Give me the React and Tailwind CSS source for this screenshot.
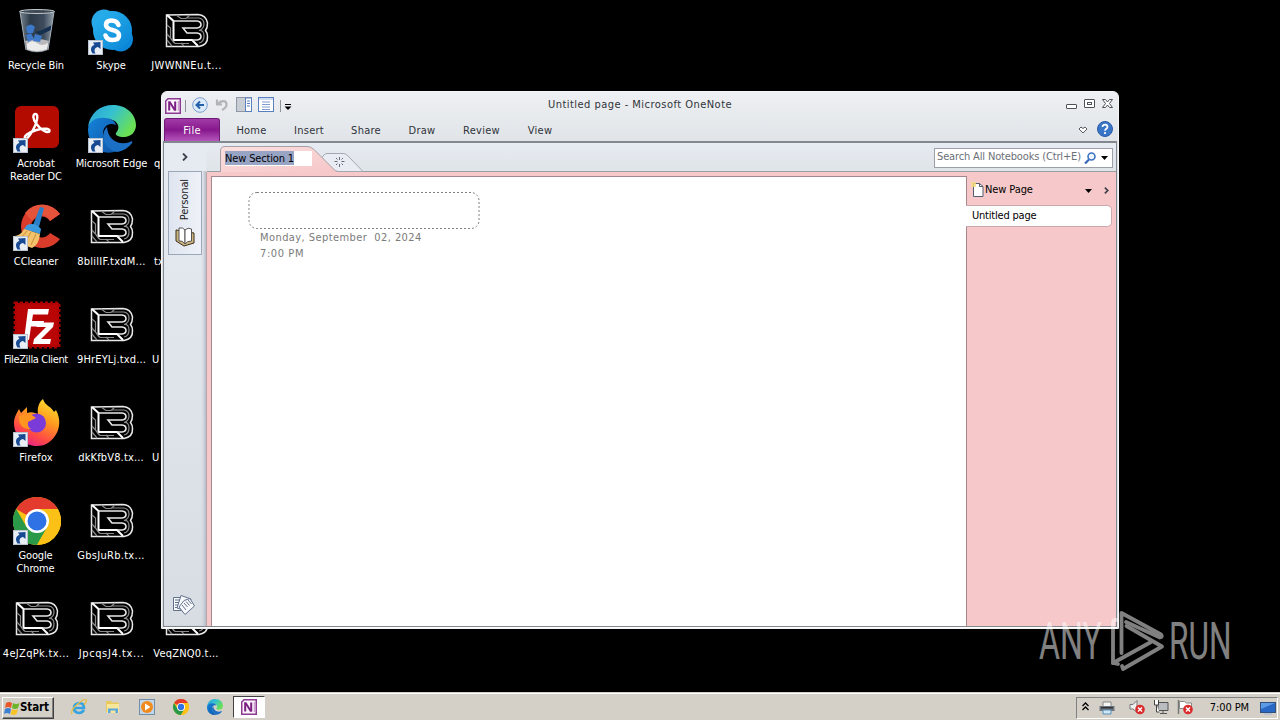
import { useId } from "react";
import { clsx } from "clsx";

function ShortcutArrow() {
  return (
    <svg viewBox="0 0 15 15" className="absolute left-0 bottom-0 h-[15px] w-[15px]">
      <rect x=".5" y=".5" width="14" height="14" fill="#e9eef5" stroke="#b9c2cf" />
      <path d="M4.500 13.500C1.500 9 3.500 5.500 6.500 5L5 2.500l7.500-.5 0 7-2.500-2C7 7.500 5.500 10 7.500 13.500z" fill="#174a93" />
    </svg>
  );
}

function RecycleIcon() {
  return (
    <svg viewBox="0 0 48 48" className="h-12 w-12">
      <defs>
        <linearGradient id="bin" x1="0" x2="1">
          <stop offset="0" stopColor="#76838f" />
          <stop offset=".3" stopColor="#2d3a48" />
          <stop offset=".7" stopColor="#3d4c5c" />
          <stop offset="1" stopColor="#93a0ab" />
        </linearGradient>
      </defs>
      <path d="M7 4 41 4 35 43Q24 48 13 43z" fill="url(#bin)" />
      <path d="M12 34Q24 30 36 34L34 43Q24 47 14 43z" fill="#b9b9bc" />
      <path d="M14 37Q19 32 24 36T35 36L34 42Q24 46 14 42z" fill="#ececec" />
      <path d="M13 20q5-5 9 0l-2 6-6 0zM22 27l7 2-2 6-7-1zM13 28l5-2 3 6-6 3z" fill="#3d78c9" />
      <path d="M22 25 29 23 39 18 38 23 27 28z" fill="#15304f" />
      <ellipse cx="24" cy="4.500" rx="17.500" ry="2" fill="#3f4a55" stroke="#c3cad0" />
      <path d="M7 5 13 43M41 5 35 43" stroke="#a9b3bc" fill="none" />
    </svg>
  );
}

function SkypeIcon() {
  return (
    <svg viewBox="0 0 48 48" className="h-12 w-12">
      <defs>
        <linearGradient id="sky" y2="1">
          <stop offset="0" stopColor="#2bb5ee" />
          <stop offset="1" stopColor="#0a84d6" />
        </linearGradient>
      </defs>
      <circle cx="16" cy="15" r="12.500" fill="#28a9e8" />
      <circle cx="32.500" cy="32" r="12.500" fill="#0b86d8" />
      <circle cx="24.500" cy="23.500" r="19.500" fill="url(#sky)" />
      <path d="M30.500 18q-1.500-4.500-7-4.500-5.500 0-5.500 4.500 0 3.500 6.500 5 6.500 1.500 6.500 5.500 0 4.500-6.500 4.500-5.500 0-7-4.500" fill="none" stroke="#fff" strokeWidth="4.600" strokeLinecap="round" />
    </svg>
  );
}

function AcrobatIcon() {
  return (
    <svg viewBox="0 0 48 48" className="h-12 w-12">
      <rect x="2" y="1" width="44" height="42" rx="6" fill="#b30b00" />
      <path d="M12.500 33.500c-3-2 3-6 11-8.500 7-2 14-1.500 13 1-1 3-9-1-13-7-4-5-4-10-1-10s2 7-1 13c-2.500 5-7 13-9 11.500z" fill="none" stroke="#fff" strokeWidth="2.400" />
    </svg>
  );
}

function EdgeIcon({ className }) {
  const id = useId();
  return (
    <svg viewBox="0 0 48 48" className={className}>
      <defs>
        <linearGradient id={id + "a"} x1="0" y1="0" x2="1" y2=".5">
          <stop offset="0" stopColor="#2a9fd8" />
          <stop offset=".5" stopColor="#35c1d0" />
          <stop offset="1" stopColor="#6adf55" />
        </linearGradient>
        <linearGradient id={id + "b"} y2="1">
          <stop offset="0" stopColor="#1583d8" />
          <stop offset="1" stopColor="#0f55a8" />
        </linearGradient>
      </defs>
      <path d="M0 22C2 8 12 0 25 0c14 0 23 10 23 20 0 7-5 12-12 12-6 0-9-2-8-4 6-7 0-14-9-14C9 14 2 18 0 22z" fill={`url(#${id}a)`} />
      <path d="M0 24c1-8 8-12 17-11 6 0 10 3 11 7-7-3-13 1-13 9 0 9 7 15 14 17-15 6-29-5-29-22z" fill={`url(#${id}b)`} />
      <path d="M19 22c-8 8-3 22 10 25 7-1 12-5 15-9 1-2-1-2-2-1-10 4-22-1-23-15z" fill="#1b6fc4" />
    </svg>
  );
}

function CCleanerIcon() {
  return (
    <svg viewBox="0 0 48 48" className="h-12 w-12">
      <path d="M47 11A21.500 21.500 0 1 0 47 36L37 30A10.500 10.500 0 1 1 37 18z" fill="#d93c2b" />
      <path d="M47 11A21.500 21.500 0 0 0 12 10l7 8a10 10 0 0 1 18 0z" fill="#e5533a" />
      <path d="M27 4 31 5 26 24 20 22z" fill="#2c7fc6" />
      <path d="M14 22q8-3 14 4l-1 5-16-5z" fill="#3b9ade" />
      <path d="M11 26 27 31Q26 42 19 45 8 42 2 33q6-1 9-7z" fill="#f2c36b" />
      <path d="M14 28 7 36M18 29 12 40M23 31 18 42" stroke="#c98f3c" />
    </svg>
  );
}

function FileZillaIcon() {
  return (
    <svg viewBox="0 0 48 48" className="h-12 w-12">
      <rect x="2" y="2" width="44" height="44" fill="#b90505" stroke="#a00" strokeWidth="3" strokeDasharray="3 2" />
      <path d="M11 39 15 8 36 8 35 13.500 20 13.500 19 20 31 20 30 25.500 18 25.500 16 39z" fill="#fff" />
      <path d="M24 21.500 41 21.500 40 26 28 38 38 38 37 43 20 43 21 38 33 26 23.500 26z" fill="#fff" />
    </svg>
  );
}

function FirefoxIcon() {
  return (
    <svg viewBox="0 0 48 48" className="h-12 w-12">
      <defs>
        <linearGradient id="ff" x1=".8" y1="0" x2=".3" y2="1">
          <stop offset="0" stopColor="#ffe22e" />
          <stop offset=".4" stopColor="#ff9a1f" />
          <stop offset=".75" stopColor="#ff4a45" />
          <stop offset="1" stopColor="#e8208a" />
        </linearGradient>
      </defs>
      <path d="M30 0c2 7 8 7 11 13l2-2c5 9 4 19-1 26C37 44 31 47 24 47 11 47 1 37 1 24c0-6 3-10 5-14l2 4 6-6 0 6c4-2 9 0 11 1-1-6 1-12 5-15z" fill="url(#ff)" />
      <circle cx="23.500" cy="24" r="9.500" fill="#7a3bd8" />
      <path d="M6 17c8-3 13-2 17 2l-6 3c-3 0-3 6 1 8-8 1-13-5-12-13z" fill="#ff9420" />
    </svg>
  );
}

function ChromeIcon({ className }) {
  return (
    <svg viewBox="0 0 48 48" className={className}>
      <circle cx="24" cy="24" r="24" fill="#fbc116" />
      <path d="M24 24 3.200 12A24 24 0 0 1 44.800 12z" fill="#e33b2e" />
      <path d="M3.200 12A24 24 0 0 0 24 48L34.400 30 24 24 13.600 30z" fill="#2b9a48" />
      <path d="M24 12 44.800 12A24 24 0 0 1 24 48L34.400 30z" fill="#fbc116" />
      <circle cx="24" cy="24" r="12" fill="#fff" />
      <circle cx="24" cy="24" r="9.500" fill="#2f72e6" />
    </svg>
  );
}

// traced "B" mark: outer outline, inner E cut and the thin hatch lines between
function TextFileIcon() {
  return (
    <svg viewBox="0 0 48 48" className="h-12 w-12" fill="none">
      <path d="M3.500 8 3.500 39.500 36 39.500Q45 38 44.500 29.500 44.500 26 42.500 23.500 44.500 21 44.500 16 43 8 35 7.500z" stroke="#e8e8e8" strokeWidth="1.500" />
      <path d="M4 8 10.500 14 10.500 33 29 33 35 39" stroke="#fff" strokeWidth="2" />
      <path d="M10.500 14 34 14Q38 14.500 38 17.500T34 21L20 21 24 26 34 26Q38 26.500 38 29.500T34 33L29 33" stroke="#e8e8e8" strokeWidth="1.600" />
      <path d="M13 8 18 11.500 23 11.500 27 8M23 11 36 11Q41 12 41 17T36 23.500M4 18 7.500 21 7.500 31 11 36M4 27 12 36.500 26 36.500M4 33 9 39M18 36 21 39M36 36Q41 35 41 29T36 23.500" stroke="#8b8b8b" strokeWidth="1.200" />
    </svg>
  );
}

const desktopIcons = [
  { label: "Recycle Bin", icon: <RecycleIcon /> },
  { label: "Acrobat Reader DC", icon: <AcrobatIcon />, shortcut: true, text: "pl-[8px] pr-[9px] tracking-[-0.1px]" },
  { label: "CCleaner", icon: <CCleanerIcon />, shortcut: true },
  { label: "FileZilla Client", icon: <FileZillaIcon />, shortcut: true, text: "pr-px tracking-[-0.35px]" },
  { label: "Firefox", icon: <FirefoxIcon />, shortcut: true, text: "pr-px tracking-[0.1px]" },
  { label: "Google Chrome", icon: <ChromeIcon className="h-12 w-12" />, shortcut: true, text: "pl-[15px] pr-[17px] tracking-[-0.15px]" },
  { label: "4eJZqPk.tx...", text: "pr-px tracking-[0.3px]" },
  { label: "Skype", icon: <SkypeIcon />, shortcut: true },
  { label: "Microsoft Edge", icon: <EdgeIcon className="h-12 w-12" />, shortcut: true, text: "whitespace-nowrap tracking-[-0.1px]" },
  { label: "8blilIF.txdM...", text: "tracking-[0.25px]" },
  { label: "9HrEYLj.txd...", text: "tracking-[0.15px]" },
  { label: "dkKfbV8.tx...", text: "pr-px tracking-[0.15px]" },
  { label: "GbsJuRb.tx...", text: "pr-px tracking-[0.3px]" },
  { label: "JpcqsJ4.tx...", text: "tracking-[0.6px]" },
  { label: "JWWNNEu.t...", text: "tracking-[0.35px]" },
  { label: "q", text: "pl-[5px] !text-left" },
  { label: "tx", text: "pl-[5px] !text-left" },
  { label: "U", text: "pl-[3px] !text-left" },
  { label: "U", text: "pl-[3px] !text-left" },
  { label: "" },
  { label: "VeqZNQ0.t...", text: "pr-px tracking-[0.2px]" },
];

function DesktopIcon({ label, icon, shortcut, text = "pr-px tracking-[-0.1px]" }) {
  return (
    <div className="flex h-[98px] flex-col items-center pt-[7px]">
      <div className="relative h-12 w-12">
        {icon || <TextFileIcon />}
        {shortcut && <ShortcutArrow />}
      </div>
      <div className={clsx("mt-[4px] w-[75px] text-center text-[11px] leading-[13px] text-white", text)}>
        {label}
      </div>
    </div>
  );
}

function OneNoteIcon() {
  return (
    <svg viewBox="0 0 16 16" className="h-4 w-4 shrink-0">
      <path d="M.75 3 3 .75 15.250.75 15.250 15.250.75 15.250z" fill="#fbf3fb" stroke="#8c3a92" strokeWidth="1.500" />
      <path d="M4.200 12.500 4.200 3.500M10.200 12.500 10.200 3.500" stroke="#7b1f82" strokeWidth="2" />
      <path d="M3.200 3.500H5.500L11.200 12.500H8.900z" fill="#7b1f82" />
      <path d="M13.300 3v10" stroke="#c48cc8" />
    </svg>
  );
}

function TitleBar() {
  return (
    <div className="relative flex h-[25px] items-center pl-[2px]">
      <OneNoteIcon />
      <div className="ml-[4px] h-3 w-px bg-[#8d939b]" />
      <svg viewBox="0 0 16 16" className="-mt-px ml-[6px] h-4 w-4">
        <circle cx="8" cy="8" r="7.300" fill="#dcebfa" stroke="#7f9ccc" />
        <path d="M12 8H5M8 4.500 4.500 8 8 11.500" fill="none" stroke="#2460a8" strokeWidth="2" />
      </svg>
      <svg viewBox="0 0 14 14" className="-mt-[2px] ml-[7px] h-[14px] w-[14px]">
        <path d="M2 1.500v5h5M3 6C6 2 11.500 2 11.500 6.500 11.500 9.500 9 11 7 12" fill="none" stroke="#b2b4b8" strokeWidth="2.200" />
      </svg>
      <svg viewBox="0 0 16 16" className="-mt-px ml-[7px] h-4 w-4">
        <rect x=".5" y=".5" width="15" height="14" fill="#c9cdd4" stroke="#8d97a8" />
        <rect x="9.500" y="1" width="6" height="13.500" fill="#fff" stroke="#5a7fc0" />
        <path d="M11 4h3M11 6.500h3M11 9h3" stroke="#5a7fc0" />
      </svg>
      <svg viewBox="0 0 16 16" className="-mt-px ml-[6px] h-4 w-4">
        <rect x=".5" y=".5" width="15" height="14" fill="#fff" stroke="#5a7fc0" />
        <path d="M1 2h14" stroke="#9db7e2" />
        <path d="M4 5h8M4 7.500h8M4 10h8M4 12.500h8" stroke="#7f9cd0" />
      </svg>
      <div className="ml-[6px] h-3 w-px bg-[#8d939b]" />
      <svg viewBox="0 0 8 6" className="ml-[3px] mt-[3px] h-[6px] w-2">
        <path d="M1 .5h6" stroke="#000" />
        <path d="M.5 2.500h7L4 6z" fill="#000" />
      </svg>
      <div className="absolute inset-x-0 text-center text-[11px] tracking-[0.47px] text-[#30343a]">
        Untitled page - Microsoft OneNote
      </div>
      <svg viewBox="0 0 48 12" className="ml-auto mr-[4px] mb-[3px] h-3 w-12" fill="none" stroke="#4d5158">
        <rect x="1.500" y="6.500" width="10" height="4" rx=".5" fill="#fff" />
        <rect x="19.500" y="1.500" width="10" height="8" rx=".5" fill="#fff" />
        <rect x="22.500" y="4.500" width="4" height="2" />
        <path d="M37.500 1.500h3L42.500 4l2-2.500h3L44.500 5.500l3 4h-3l-2-2.500-2 2.500h-3l3-4z" fill="#fff" />
      </svg>
    </div>
  );
}

const ribbonTabs = [
  { name: "Home", width: "w-[63px]" },
  { name: "Insert", width: "w-[52px]" },
  { name: "Share", width: "w-[62px]" },
  { name: "Draw", width: "w-[50px]" },
  { name: "Review", width: "w-[69px]" },
  { name: "View", width: "w-[48px]" },
];

function RibbonTabs() {
  return (
    <div className="flex h-[23px] items-center text-[11px] text-[#30343a]">
      <div className="ml-px flex h-full w-[56px] items-center justify-center rounded-t-[3px] border border-b-0 border-[#6d1a74] bg-linear-to-b from-[#a23aa8] via-[#87168d] to-[#b653bd] pt-[2px] tracking-[0.3px] text-white">
        File
      </div>
      {ribbonTabs.map((tab) => (
        <div key={tab.name} className={clsx("pt-[3px] text-center tracking-[0.25px]", tab.width)}>
          {tab.name}
        </div>
      ))}
      <svg viewBox="0 0 10 8" className="ml-auto h-2 w-[10px]">
        <path d="M1 3 3 1 5 2.500 7 1 9 3 5 7z" fill="#fff" stroke="#555a61" />
      </svg>
      <svg viewBox="0 0 16 16" className="-mt-px ml-[9px] mr-[4px] h-4 w-4">
        <circle cx="8" cy="8" r="7.500" fill="#3a76c8" stroke="#2b5ba8" />
        <path d="M5.500 6C5.500 2.800 10.500 3 10.500 6 10.500 7.800 8 7.800 8 9.800M8 11v2" fill="none" stroke="#fff" strokeWidth="1.700" />
      </svg>
    </div>
  );
}

function Sidebar() {
  return (
    <div className="flex w-[42px] flex-col items-center bg-linear-to-b from-[#e6eaf1] to-[#d8dce3] shadow-[inset_-3px_0_3px_-1px_#b8bec8]">
      <div className="flex h-[28px] w-full items-center justify-center bg-[#e6eaf1]">
        <svg viewBox="0 0 6 8" className="h-2 w-[6px]" fill="none" stroke="#3c4048" strokeWidth="1.800">
          <path d="M1 .5 4.500 4 1 7.500" />
        </svg>
      </div>
      <div className="flex h-[84px] w-[34px] flex-col items-center justify-between border border-[#9da7ba] bg-linear-to-r from-[#dfe5f0] to-[#eef1f7] pt-[7px] pb-[7px]">
        <div className="rotate-180 text-[11px] leading-[14px] tracking-[-0.1px] text-[#222] [writing-mode:vertical-rl]">Personal</div>
        <svg viewBox="0 0 21 21" className="h-[21px] w-[21px]" strokeLinejoin="round">
          <path d="M1 4 1 15 9 20 19 17 19 7z" fill="#cdb680" stroke="#3b3018" />
          <path d="M4 2Q8 1 10 4L10 18Q7 14 4 15z" fill="#fff" stroke="#555" />
          <path d="M10 4Q13 1 16.500 3L16.500 15Q12 15 10 18z" fill="#fff" stroke="#555" />
        </svg>
      </div>
      <svg viewBox="0 0 24 22" className="mt-auto mr-[2px] mb-[10px] h-[22px] w-6" fill="#f7f9fc" stroke="#63728c">
        <path d="M1.500 3.500h9v13h-9z" />
        <path d="M3 6h6M3 8.500h6M3 11h6M3 13.500h6" />
        <path d="M9 1.500 19 5 15 17 5 14z" />
        <path d="M12 6.500 18 4.500 22.500 12 13 20.500 7 13z" />
        <path d="M12 9l3.500 4M14 7.500l3.500 4M16 6l3.500 4M10 11l4 5" />
      </svg>
    </div>
  );
}

function SectionStrip() {
  return (
    <div className="relative flex h-[29px] items-center bg-linear-to-b from-[#e7ebf2] to-[#dfe4e8]">
      <svg viewBox="-1 0 910 29" className="absolute inset-0 h-[29px] w-[910px]">
        <defs>
          <linearGradient id="tab" y2="1">
            <stop offset="0" stopColor="#fbe0e0" />
            <stop offset="1" stopColor="#f6c6c8" />
          </linearGradient>
        </defs>
        <path d="M0 28.500H909" stroke="#9a9ea5" />
        <path d="M115 14.500Q117 10.500 120 10.500H136Q139 10.500 141 13L156 28.500H125z" fill="#e9edf3" stroke="#a3a8b0" />
        <path d="M13.500 29V8Q13.500 3.500 18 3.500H100Q104 3.500 107 6.500L128 27.500 131 29z" fill="url(#tab)" />
        <path d="M13.500 29V8Q13.500 3.500 18 3.500H100Q104 3.500 107 6.500L128 27.500 131 28.500" fill="none" stroke="#a8a0a4" />
        <path d="M132.500 14v3M132.500 21v3M127.500 18.500h3M134.500 18.500h3M129 15l1.500 1.500M136 15l-1.500 1.500M129 22l1.500-1.500M136 22l-1.500-1.500" stroke="#666b73" />
      </svg>
      <div className="relative ml-[19px] mt-[1px] h-[15px] w-[87px] bg-white text-[11px] leading-[15px] tracking-[-0.15px] text-black">
        <span className="inline-block h-[14px] bg-[#98a4c4] leading-[15px]">New Section 1</span>
      </div>
      <div className="relative ml-auto mr-[3px] flex h-[20px] w-[179px] items-center whitespace-nowrap border border-[#9a9fa8] bg-white pl-[2px] text-[11px] tracking-[-0.15px] text-[#6c7078]">
        Search All Notebooks (Ctrl+E)
        <svg viewBox="0 0 12 12" className="ml-auto h-3 w-3 shrink-0" fill="none">
          <path d="M1 11.500 5 7.500" stroke="#3567b8" strokeWidth="2.200" />
          <circle cx="7.500" cy="4.500" r="3.500" stroke="#3d73c4" strokeWidth="1.600" fill="#eef5ff" />
        </svg>
        <svg viewBox="0 0 7 4" className="ml-[5px] mr-[4px] h-1 w-[7px] shrink-0">
          <path d="M0 0h7L3.500 4z" />
        </svg>
      </div>
    </div>
  );
}

function PageArea() {
  return (
    <div className="flex min-h-0 flex-1 border-l border-[#b9a4aa] bg-[#f6c8ca] pl-[4px] text-[11px]">
      <div className="mt-[4px] w-[756px] border border-b-0 border-[#a3898d] bg-white pl-[36px] pt-[15px] text-[#7b7b7b]">
        <svg viewBox="0 0 232 38" className="h-[38px] w-[232px]">
          <rect x="1" y=".5" width="230" height="36" rx="8" fill="none" stroke="#808080" strokeDasharray="2 2" />
        </svg>
        <div className="pl-[12px] text-[11px] leading-4 tracking-[0.42px]">
          <div className="whitespace-pre">Monday, September  02, 2024</div>
          <div className="tracking-[0.6px]">7:00 PM</div>
        </div>
      </div>
      <div className="flex-1 text-black">
        <div className="flex h-[33px] items-center pl-[4px] pt-[4px] pr-[7px] tracking-[-0.1px]">
          <svg viewBox="0 0 14 15" className="-mt-[2px] h-[15px] w-[14px]">
            <path d="M2.500 1.500h6l3.500 3v10h-9.500z" fill="#fff" stroke="#555e70" />
            <path d="M8.500 1.500v3h3.500" fill="none" stroke="#555e70" />
            <path d="M0 0h5v5H0z" fill="#f7dc7c" opacity=".8" />
          </svg>
          New Page
          <svg viewBox="0 0 7 4" className="ml-auto h-1 w-[7px]">
            <path d="M0 0h7L3.500 4z" />
          </svg>
          <svg viewBox="0 0 6 8" className="ml-[12px] h-[7px] w-[5px]" fill="none" stroke="#3c4048" strokeWidth="2">
            <path d="M1 .5 4.500 4 1 7.500" />
          </svg>
        </div>
        <div className="-ml-px flex h-[22px] w-[146px] items-center rounded-r-[5px] border border-l-0 border-[#c9a9ac] bg-white pl-[6px] tracking-[-0.2px]">
          Untitled page
        </div>
      </div>
    </div>
  );
}

function OneNoteWindow() {
  return (
    <div className="absolute left-[161px] top-[91px] flex h-[538px] w-[958px] flex-col rounded-t-[6px] border border-[#f4f5f7] bg-linear-to-b from-[#eef0f3] from-0% to-[#dfe3e7] to-10% p-px pb-0">
      <TitleBar />
      <RibbonTabs />
      <div className="flex min-h-0 flex-1 border border-t-2 border-[#83888f]">
        <Sidebar />
        <div className="flex min-w-0 flex-1 flex-col">
          <SectionStrip />
          <PageArea />
        </div>
      </div>
      <div className="h-px bg-white" />
    </div>
  );
}

function Watermark() {
  return (
    <div className="absolute left-[1038px] top-[610px] h-[64px] w-[206px] opacity-50">
      <svg viewBox="0 0 206 64" className="h-[64px] w-[206px]" fill="#fff">
        <g fontFamily="Roboto" fontSize="51">
          <text transform="translate(1 48.500) scale(.63 1)">ANY</text>
          <text transform="translate(131 48.500) scale(.62 1)">RUN</text>
        </g>
        <g fill="none" stroke="#fff" strokeWidth="3.800" strokeLinecap="round" strokeLinejoin="round">
          <path d="M83.500 43V3L123 24.500Q125 27 122 27.500L88 12M79 10Q75 9 75 13V53L113 32" />
          <path d="M88.500 16 124 36.500 85 59 84 56M75 53 80 54" />
        </g>
      </svg>
    </div>
  );
}

function Taskbar() {
  return (
    <div className="absolute inset-x-0 bottom-0 flex h-[28px] items-center border-t border-[#d4d0c8] bg-[#d4d0c8] px-[2px] text-[11px] shadow-[inset_0_1px_0_#fff]">
      <div className="mt-[2px] flex h-[22px] w-[52px] items-center border border-t-white border-l-white border-r-[#404040] border-b-[#404040] pl-[1px] font-bold text-black shadow-[inset_-1px_-1px_0_#808080]">
        <svg viewBox="0 0 16 16" className="h-4 w-4">
          <path d="M2 3Q5 1 8 3L7 8Q4 6 1 8z" fill="#e8562a" />
          <path d="M9 3Q12 5 15.500 3L14 8Q11 10 8 8z" fill="#6fb52c" />
          <path d="M1 9Q4 7 7 9L6 14Q3 12 0 14z" fill="#3c80d4" />
          <path d="M8 9Q11 11 14 9L12.500 14Q10 16 6.500 14z" fill="#f7c325" />
        </svg>
        <span className="pt-px text-[11.5px] tracking-[-0.1px]">Start</span>
      </div>
      <svg viewBox="0 0 16 16" className="ml-[17px] h-4 w-4" fill="none">
        <path d="M13 11Q11 14 8 14 3 13.500 3 9T8 4Q13 4 13 9H4" stroke="#36a3e0" strokeWidth="2.600" />
        <path d="M1 15Q-1 11 8 4T15 1Q16 3 13 6" stroke="#e6bd3d" strokeWidth="1.300" />
      </svg>
      <svg viewBox="0 0 16 16" className="ml-[18px] h-4 w-4">
        <path d="M1 2h5l1 1.500h7V13H1z" fill="#e9c95c" />
        <path d="M2 5h12v9H2z" fill="#f8e79b" />
        <path d="M3 14V9.500h10V14h-2.500v-2.500h-5V14z" fill="#58a8dd" />
      </svg>
      <svg viewBox="0 0 16 16" className="ml-[18px] h-4 w-4">
        <rect x=".5" y=".5" width="15" height="15" fill="#c4d6e6" stroke="#6f8eaa" />
        <circle cx="8" cy="8" r="6" fill="#f08a1d" />
        <path d="M6 4.500v7L11.500 8z" fill="#fff" />
      </svg>
      <ChromeIcon className="ml-[18px] h-4 w-4" />
      <EdgeIcon className="ml-[18px] h-4 w-4" />
      <div className="ml-[10px] mt-[1px] flex h-[22px] w-[32px] items-center justify-center border border-t-[#404040] border-l-[#404040] border-r-white border-b-white bg-white">
        <OneNoteIcon />
      </div>
      <div className="ml-auto mt-[2px] flex h-[22px] w-[202px] items-center border border-t-[#808080] border-l-[#808080] border-r-white border-b-white pl-[5px]">
        <svg viewBox="0 0 7 9" className="mb-[2px] h-[9px] w-[7px]" fill="none" stroke="#000" strokeWidth="1.300">
          <path d="M.5 4 3.500 1 6.500 4M.5 8 3.500 5 6.500 8" />
        </svg>
        <svg viewBox="0 0 16 14" className="ml-[10px] h-[14px] w-4">
          <path d="M4 1h8v5H4z" fill="#f5f5f5" stroke="#888" />
          <path d="M.5 5h15v5H.5z" fill="#6e747c" />
          <path d="M2 6h12v1.500H2z" fill="#33373d" />
          <path d="M4 9h8v4H4z" fill="#cfe6f7" stroke="#5b8fb5" />
        </svg>
        <svg viewBox="0 0 16 16" className="ml-[14px] mb-px h-4 w-4">
          <path d="M1 5.500h3L8 1.500v12L4 10H1z" fill="#eee" stroke="#777" />
          <circle cx="11" cy="10.500" r="4.800" fill="#d92b2b" />
          <path d="M9 8.500 13 12.500M13 8.500 9 12.500" stroke="#fff" strokeWidth="1.400" />
        </svg>
        <svg viewBox="0 0 16 16" className="ml-[8px] mb-px h-4 w-4">
          <path d="M5 3.500h10v8H5zM7 14.500h7M10 12v2" fill="#b9bdc0" stroke="#555" />
          <path d="M1.500 1v5h4V1M3.500 6v7h3" fill="#fff" stroke="#444" />
        </svg>
        <svg viewBox="0 0 16 16" className="ml-[8px] mb-px h-4 w-4">
          <path d="M1.500 1v14" stroke="#777" strokeWidth="1.500" />
          <path d="M2.500 2.500h5l2 1.500h5v7h-5l-2-1.500h-5z" fill="#fff" stroke="#888" />
          <circle cx="11" cy="10.500" r="4.800" fill="#d92b2b" />
          <path d="M9 8.500 13 12.500M13 8.500 9 12.500" stroke="#fff" strokeWidth="1.400" />
        </svg>
        <span className="ml-auto pt-px tracking-[-0.1px] text-black">7:00 PM</span>
        <svg viewBox="0 0 16 14" className="ml-[11px] mr-px h-[14px] w-4">
          <rect x=".5" y="1.500" width="15" height="10" fill="#2868c4" stroke="#34507c" />
          <path d="M1 2h14L1 8z" fill="#5c9ae6" />
          <path d="M4 13h8" stroke="#9db7d6" />
        </svg>
      </div>
    </div>
  );
}

export default function App() {
  return (
    <div className="relative h-[720px] w-[1280px] overflow-hidden bg-black font-['DejaVu_Sans_Condensed','DejaVu_Sans',sans-serif]">
      <div className="-ml-px grid w-max auto-cols-[75px] grid-flow-col grid-rows-7">
        {desktopIcons.map((item, i) => (
          <DesktopIcon key={i} {...item} />
        ))}
      </div>
      <OneNoteWindow />
      <Watermark />
      <Taskbar />
    </div>
  );
}
